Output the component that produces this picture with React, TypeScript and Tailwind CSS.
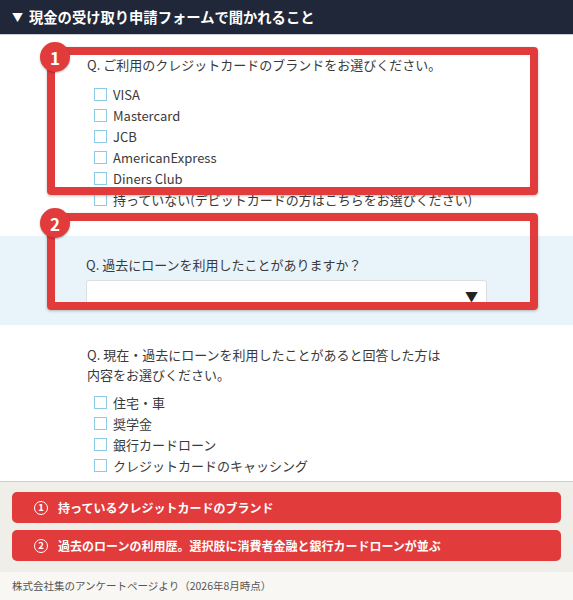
const brands = ["VISA", "Mastercard", "JCB", "AmericanExpress", "Diners Club", "持っていない(デビットカードの方はこちらをお選びください)"];
const loans = ["住宅・車", "奨学金", "銀行カードローン", "クレジットカードのキャッシング"];

const Check = ({ label }: { label: string }) => (
  <div className="flex items-center gap-[6px] h-[21px] pl-[7px]">
    <span className="w-[13px] h-[13px] border-[1.5px] border-[#8ccbe8] bg-white shrink-0" />
    <span className="text-[13px] leading-[21px] text-[#3a3a3a]">{label}</span>
  </div>
);

const Badge = ({ n }: { n: string }) => (
  <div className="absolute -left-[15px] -top-[13px] w-[30px] h-[30px] rounded-full bg-[#e23b3b] text-white text-[17px] font-bold flex items-center justify-center shadow-[0_1px_2px_rgba(0,0,0,0.3)] leading-none">
    {n}
  </div>
);

const Banner = ({ mark, text }: { mark: string; text: string }) => (
  <div className="h-[31px] bg-[#e23b3c] rounded-[5px] flex items-center pl-[22px] gap-[10px] text-white font-bold">
    <span className="w-[14px] h-[14px] rounded-full border-[1.5px] border-white flex items-center justify-center text-[9.5px] leading-none">{mark}</span>
    <span className="text-[12px] leading-none">{text}</span>
  </div>
);

export default function App() {
  return (
    <div className="w-[573px] h-[600px] overflow-hidden bg-white font-['Noto_Sans_CJK_JP',sans-serif] flex flex-col">
      <div className="h-[35px] shrink-0 bg-[#1f2738] border-b border-[#c9ced6] flex items-center pl-[12px] gap-[6px] text-white font-bold">
        <span className="text-[11px]">▼</span>
        <span className="text-[14.3px] leading-none">現金の受け取り申請フォームで聞かれること</span>
      </div>

      <div className="relative">
        <div className="pl-[87px] pt-[20px] pb-[26px]">
          <p className="text-[13px] leading-[20px] text-[#3a3a3a]">Q. ご利用のクレジットカードのブランドをお選びください。</p>
          <div className="mt-[9px]">
            {brands.map((b) => (
              <Check key={b} label={b} />
            ))}
          </div>
        </div>

        <div className="bg-[#e8f4fa] pl-[86px] pr-[86px] pt-[19px] pb-[15px]">
          <p className="text-[13px] leading-[20px] text-[#3a3a3a]">Q. 過去にローンを利用したことがありますか？</p>
          <div className="mt-[5px] h-[30px] bg-white border border-[#dcdfe2] rounded-[3px] flex items-center justify-end pr-[8px]">
            <span className="text-[13px] text-[#222] leading-none">▼</span>
          </div>
        </div>

        <div className="pl-[87px] pt-[20px] pb-[5px] border-b border-[#cfcfcf]">
          <p className="text-[13px] leading-[20px] text-[#3a3a3a]">
            Q. 現在・過去にローンを利用したことがあると回答した方は
            <br />
            内容をお選びください。
          </p>
          <div className="mt-[7px]">
            {loans.map((l) => (
              <Check key={l} label={l} />
            ))}
          </div>
        </div>

        <div className="absolute left-[47px] top-[12px] w-[491px] h-[148px] border-[8px] border-[#e23b3b] rounded-[4px] shadow-[0_1px_3px_rgba(0,0,0,0.25)]">
          <Badge n="1" />
        </div>
        <div className="absolute left-[47px] top-[178px] w-[491px] h-[97px] border-[8px] border-[#e23b3b] rounded-[4px] shadow-[0_1px_3px_rgba(0,0,0,0.25)]">
          <Badge n="2" />
        </div>
      </div>

      <div className="bg-[#efeee9] px-[12px] pt-[10px] pb-[11px] flex flex-col gap-[7px]">
        <Banner mark="1" text="持っているクレジットカードのブランド" />
        <Banner mark="2" text="過去のローンの利用歴。選択肢に消費者金融と銀行カードローンが並ぶ" />
      </div>

      <div className="flex-1 bg-[#f8f7f4] pl-[12px] flex items-center">
        <span className="text-[10.5px] text-[#555]">株式会社集のアンケートページより（2026年8月時点）</span>
      </div>
    </div>
  );
}
